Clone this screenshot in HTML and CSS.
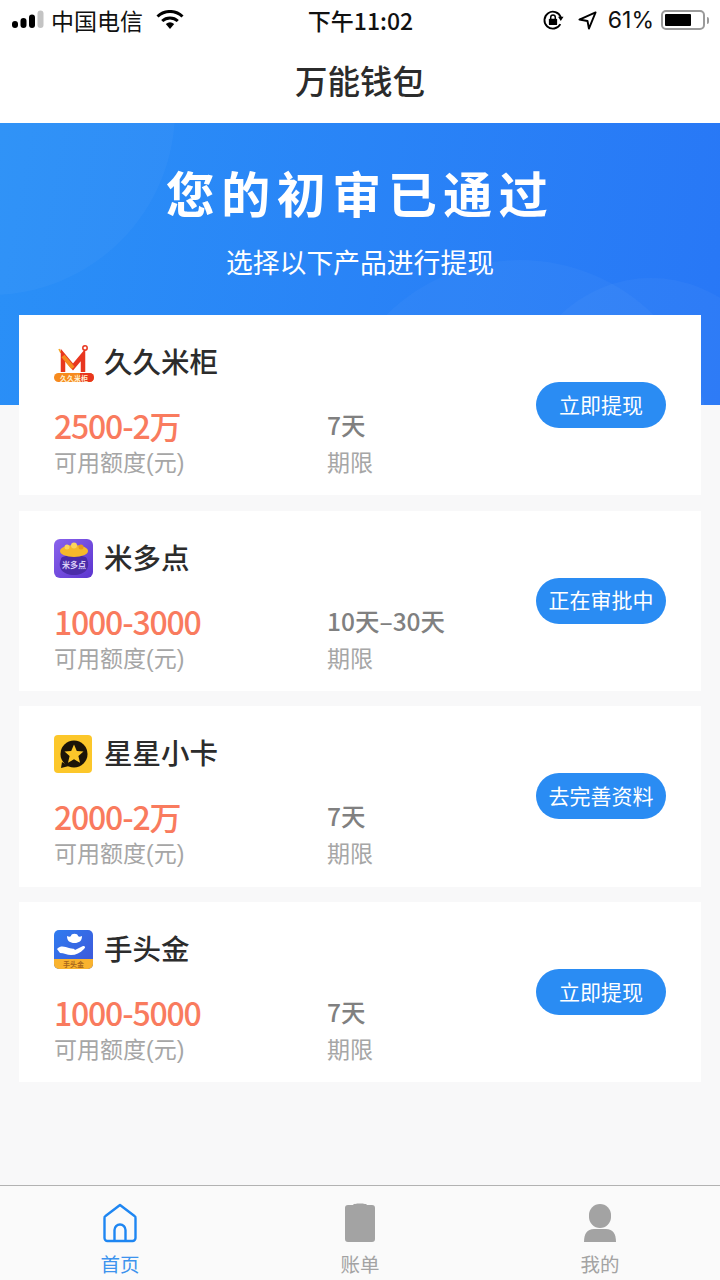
FILE: index.html
```html
<!DOCTYPE html>
<html lang="zh-CN">
<head>
    <meta charset="UTF-8">
    <meta name="viewport" content="width=device-width, initial-scale=1.0">
    <title>万能钱包</title>
    <link rel="stylesheet" href="styles.css">
</head>
<body>
    <div class="status-bar">
        <div class="status-left">
            <svg class="signal" width="32" height="20" viewBox="0 0 32 20">
                <rect x="0" y="11" width="6" height="7" rx="3" fill="#000"/>
                <rect x="8.5" y="8" width="6" height="10" rx="3" fill="#000"/>
                <rect x="17" y="4.5" width="6" height="13.5" rx="3" fill="#000"/>
                <rect x="25.5" y="0.5" width="6" height="17.5" rx="3" fill="#c4c4c4"/>
            </svg>
            <span>中国电信</span>
            <svg class="wifi" width="28" height="20" viewBox="0 0 28 20">
                <path d="M1.5 6.5 A18 18 0 0 1 26.5 6.5" fill="none" stroke="#000" stroke-width="3"/>
                <path d="M6.2 11 A11.5 11.5 0 0 1 21.8 11" fill="none" stroke="#000" stroke-width="3"/>
                <path d="M9.8 14 A6.5 6.5 0 0 1 18.2 14 L14 19 Z" fill="#000"/>
            </svg>
        </div>
        <div class="status-time">下午11:02</div>
        <div class="status-right">
            <svg width="22" height="22" viewBox="0 0 24 24">
                <path d="M20.5 9 A9.2 9.2 0 1 0 20 16.5" fill="none" stroke="#000" stroke-width="2"/>
                <path d="M17.5 8.5 L23.5 8.5 L20.5 13 Z" fill="#000"/>
                <rect x="7.5" y="10.5" width="9" height="7" rx="1" fill="#000"/>
                <path d="M9.5 11 V9 A2.5 2.5 0 0 1 14.5 9 V11" fill="none" stroke="#000" stroke-width="1.6"/>
            </svg>
            <svg class="location" width="19" height="19" viewBox="0 0 20 20">
                <path d="M18.5 1.5 L1.5 9 L10 10.5 L11.5 18.5 Z" fill="none" stroke="#000" stroke-width="2" stroke-linejoin="round"/>
            </svg>
            <span class="percent">61%</span>
            <div class="battery"><div class="battery-level"></div></div>
            <div class="battery-cap"></div>
        </div>
    </div>

    <div class="nav-bar">万能钱包</div>

    <div class="hero">
        <div class="hero-circle circle-a"></div>
        <div class="hero-circle circle-b"></div>
        <div class="hero-circle circle-c"></div>
        <h1>您的初审已通过</h1>
        <p>选择以下产品进行提现</p>
    </div>

    <div class="card-list">
        <div class="card">
            <div class="card-main">
                <div class="card-head">
                    <svg class="logo" width="40" height="40" viewBox="0 0 40 40">
                        <path d="M5 6 L7 10" stroke="#f5a623" stroke-width="1.500"/>
                        <path d="M9 29 V12 L19 24 L29 12 V29" fill="none" stroke="#e8361f" stroke-width="4.500"/>
                        <path d="M9 13 L19 25" fill="none" stroke="#f68a1e" stroke-width="4"/>
                        <circle cx="31" cy="5" r="2.200" fill="none" stroke="#e8361f" stroke-width="1.500"/>
                        <rect x="0" y="30" width="40" height="9" rx="4.500" fill="#f68a1e"/>
                        <path d="M26 30 H35.500 A4.500 4.500 0 0 1 35.500 39 H26 Z" fill="#e8361f"/>
                        <text class="logo-text" x="20" y="37.500" fill="#fff0d0" font-size="7">久久米柜</text>
                    </svg>
                    <span class="name">久久米柜</span>
                </div>
                <div class="stats">
                    <div class="stat-amount">
                        <div class="amount">2500-2万</div>
                        <div class="label">可用额度(元)</div>
                    </div>
                    <div class="stat-term">
                        <div class="term">7天</div>
                        <div class="label">期限</div>
                    </div>
                </div>
            </div>
            <div class="btn">立即提现</div>
        </div>

        <div class="card">
            <div class="card-main">
                <div class="card-head">
                    <svg class="logo" width="40" height="40" viewBox="0 0 40 40">
                        <defs>
                            <linearGradient id="purple" x1="0" y1="0" x2="1" y2="1">
                                <stop offset="0" stop-color="#8a63ec"/>
                                <stop offset="1" stop-color="#5b35cf"/>
                            </linearGradient>
                        </defs>
                        <rect width="39" height="39" rx="6" fill="url(#purple)"/>
                        <path d="M7 20 C7 15 33 15 33 20 C37 29 31 36 20 36 C9 36 3 29 7 20 Z" fill="#4a2ca8"/>
                        <ellipse cx="20" cy="12" rx="14" ry="6" fill="#f6b92b"/>
                        <circle cx="13" cy="8" r="2.500" fill="#fbd45c"/>
                        <circle cx="20" cy="6.500" r="3" fill="#fbd45c"/>
                        <circle cx="27" cy="8" r="2.500" fill="#e89a1c"/>
                        <text class="logo-text" x="20" y="29" fill="#dcd2f8" font-size="8">米多点</text>
                    </svg>
                    <span class="name">米多点</span>
                </div>
                <div class="stats">
                    <div class="stat-amount">
                        <div class="amount">1000-3000</div>
                        <div class="label">可用额度(元)</div>
                    </div>
                    <div class="stat-term">
                        <div class="term">10天–30天</div>
                        <div class="label">期限</div>
                    </div>
                </div>
            </div>
            <div class="btn">正在审批中</div>
        </div>

        <div class="card">
            <div class="card-main">
                <div class="card-head">
                    <svg class="logo" width="40" height="40" viewBox="0 0 40 40">
                        <rect width="38" height="38" y="1" rx="4" fill="#fcc72a"/>
                        <circle cx="20" cy="20" r="13.500" fill="#1c1408"/>
                        <path d="M8 28 L7 34 L15 32 Z" fill="#1c1408"/>
                        <path d="M20 10.500 L22.800 17 L29.500 17.600 L24.400 22 L26 28.700 L20 25.200 L14 28.700 L15.600 22 L10.500 17.600 L17.200 17 Z" fill="#fcc72a"/>
                    </svg>
                    <span class="name">星星小卡</span>
                </div>
                <div class="stats">
                    <div class="stat-amount">
                        <div class="amount">2000-2万</div>
                        <div class="label">可用额度(元)</div>
                    </div>
                    <div class="stat-term">
                        <div class="term">7天</div>
                        <div class="label">期限</div>
                    </div>
                </div>
            </div>
            <div class="btn">去完善资料</div>
        </div>

        <div class="card">
            <div class="card-main">
                <div class="card-head">
                    <svg class="logo" width="40" height="40" viewBox="0 0 40 40">
                        <defs>
                            <linearGradient id="blue" x1="0" y1="0" x2="1" y2="1">
                                <stop offset="0" stop-color="#2f7cf0"/>
                                <stop offset="1" stop-color="#3f55d8"/>
                            </linearGradient>
                        </defs>
                        <rect y="0" width="39" height="39" rx="5" fill="url(#blue)"/>
                        <path d="M0 29 H39 V34 A5 5 0 0 1 34 39 H5 A5 5 0 0 1 0 34 Z" fill="#f9b32f"/>
                        <path d="M13 6 C15 7 16 7 17 6 C17 3 24 3 24 6 C25 7 26 7 28 6 C28 11 25 13 20.500 13 C16 13 13 11 13 6 Z" fill="#fff"/>
                        <path d="M3 19 C7 15 11 17 15 18 C18 19 20 18 21 20 L29 16 C31 16 32 17 30 19 C26 23 22 25 17 25 C13 25 10 23 6 23 Z" fill="#fff"/>
                        <text class="logo-text" x="19.500" y="37" fill="#a8671c" font-size="7">手头金</text>
                    </svg>
                    <span class="name">手头金</span>
                </div>
                <div class="stats">
                    <div class="stat-amount">
                        <div class="amount">1000-5000</div>
                        <div class="label">可用额度(元)</div>
                    </div>
                    <div class="stat-term">
                        <div class="term">7天</div>
                        <div class="label">期限</div>
                    </div>
                </div>
            </div>
            <div class="btn">立即提现</div>
        </div>
    </div>

    <div class="tab-bar">
        <div class="tab tab-active">
            <svg width="34" height="40" viewBox="0 0 34 40">
                <path d="M17 2 L31.500 13 A2 2 0 0 1 32.500 15 V35 A3 3 0 0 1 29.500 38 H4.500 A3 3 0 0 1 1.500 35 V15 A2 2 0 0 1 2.500 13 Z" fill="none" stroke="#1e86f2" stroke-width="2.400" stroke-linejoin="round"/>
                <path d="M11.500 38 V27 A5.500 5.500 0 0 1 22.500 27 V38" fill="none" stroke="#1e86f2" stroke-width="2.400"/>
            </svg>
            <span>首页</span>
        </div>
        <div class="tab">
            <svg width="34" height="40" viewBox="0 0 34 40">
                <path d="M10 2 C10 0 24 0 24 2 H29 A3 3 0 0 1 32 5 V36 A3 3 0 0 1 29 39 H5 A3 3 0 0 1 2 36 V5 A3 3 0 0 1 5 2 Z" fill="#a3a3a3"/>
            </svg>
            <span>账单</span>
        </div>
        <div class="tab">
            <svg width="34" height="40" viewBox="0 0 34 40">
                <rect x="6" y="1" width="22" height="24" rx="11" fill="#a3a3a3"/>
                <path d="M1 39 C1 31 4 26 11 26 H23 C30 26 33 31 33 39 Z" fill="#a3a3a3"/>
            </svg>
            <span>我的</span>
        </div>
    </div>
</body>
</html>
```

FILE: styles.css
```css
* {
    box-sizing: border-box;
}
body {
    font-family: "Noto Sans CJK SC", "Noto Sans", sans-serif;
    background-color: #f8f8f9;
    margin: 0;
    width: 720px;
    height: 1280px;
    overflow: hidden;
    display: flex;
    flex-direction: column;
}

/* status bar */
.status-bar {
    height: 40px;
    background-color: #fff;
    display: grid;
    grid-template-columns: 1fr auto 1fr;
    align-items: center;
    padding: 0 11px 0 12px;
    font-size: 23px;
    color: #111;
}
.status-left {
    display: flex;
    align-items: center;
}
.status-left span {
    margin-left: 7px;
}
.wifi {
    margin-left: 13px;
}
.status-time {
    font-weight: 500;
    font-size: 23px;
}
.status-right {
    display: flex;
    align-items: center;
    justify-content: flex-end;
}
.location {
    margin-left: 14px;
}
.percent {
    font-family: "Inter", sans-serif;
    margin-left: 11px;
    font-size: 23px;
}
.battery {
    width: 44px;
    height: 20px;
    margin-left: 7px;
    border: 2px solid #9a9a9a;
    border-radius: 5px;
    padding: 2px;
}
.battery-level {
    width: 26px;
    height: 100%;
    background-color: #000;
    border-radius: 1px;
}
.battery-cap {
    width: 2px;
    height: 7px;
    margin-left: 2px;
    background-color: #9a9a9a;
    border-radius: 0 2px 2px 0;
}

.nav-bar {
    height: 83px;
    background-color: #fff;
    display: flex;
    align-items: center;
    justify-content: center;
    font-size: 32.500px;
    font-weight: 500;
    color: #2b2b2b;
    padding-bottom: 5px;
}

/* blue header */
.hero {
    position: relative;
    overflow: hidden;
    height: 282px;
    background: linear-gradient(100deg, #2a90f7, #2877f6);
    text-align: center;
    color: #fff;
}
.hero-circle {
    position: absolute;
    border-radius: 50%;
    background-color: rgba(255, 255, 255, 0.03);
}
.circle-a {
    left: -195px;
    top: -198px;
    width: 370px;
    height: 370px;
}
.circle-b {
    left: 330px;
    top: 137px;
    width: 380px;
    height: 380px;
}
.circle-c {
    left: 521px;
    top: 155px;
    width: 260px;
    height: 260px;
}
.hero h1 {
    position: relative;
    margin: 37px 0 0;
    font-size: 49px;
    line-height: 64px;
    font-weight: 700;
    letter-spacing: 6.500px;
}
.hero p {
    position: relative;
    margin: 20px 0 0;
    font-size: 26.800px;
    line-height: 36px;
}

/* product cards */
.card-list {
    margin-top: -90px;
    position: relative;
    padding: 0 19px;
    display: flex;
    flex-direction: column;
    gap: 15.370px;
}
.card {
    height: 180.300px;
    background-color: #fff;
    display: flex;
    align-items: center;
    justify-content: space-between;
    padding: 0 35px;
}
.card-main {
    align-self: flex-start;
    margin-top: 28px;
}
.card-head {
    display: flex;
    align-items: center;
    gap: 10px;
    height: 40px;
}
.logo {
    flex-shrink: 0;
}
.logo-text {
    text-anchor: middle;
    font-weight: 700;
}
.name {
    font-size: 28.500px;
    font-weight: 500;
    color: #2c2c2c;
    padding-bottom: 5px;
}
.stats {
    display: flex;
    margin-top: 20px;
}
.stat-amount {
    width: 273px;
}
.amount {
    font-size: 32px;
    line-height: 44px;
    font-weight: 500;
    letter-spacing: -1.200px;
    margin-bottom: 2px;
    color: #f97b5e;
}
.term {
    font-size: 24.500px;
    line-height: 44px;
    font-weight: 500;
    margin-bottom: 2px;
    color: #808080;
}
.label {
    font-family: "Liberation Sans", "Noto Sans CJK SC", sans-serif;
    font-size: 23px;
    line-height: 28px;
    color: #a6a6a6;
}
.btn {
    width: 130px;
    height: 46px;
    border-radius: 23px;
    background-color: #2a8cf3;
    color: #fff;
    font-size: 21px;
    padding-bottom: 3px;
    display: flex;
    align-items: center;
    justify-content: center;
}

/* bottom tabs */
.tab-bar {
    position: absolute;
    left: 0;
    right: 0;
    bottom: 0;
    height: 95px;
    background-color: #fafafa;
    border-top: 1px solid #b2b2b2;
    display: flex;
}
.tab {
    flex: 1;
    display: flex;
    flex-direction: column;
    align-items: center;
    padding-top: 17px;
    font-size: 19.500px;
    color: #a3a3a3;
}
.tab span {
    line-height: 28px;
    margin-top: 7px;
}
.tab-active {
    color: #3d93ee;
}
```
